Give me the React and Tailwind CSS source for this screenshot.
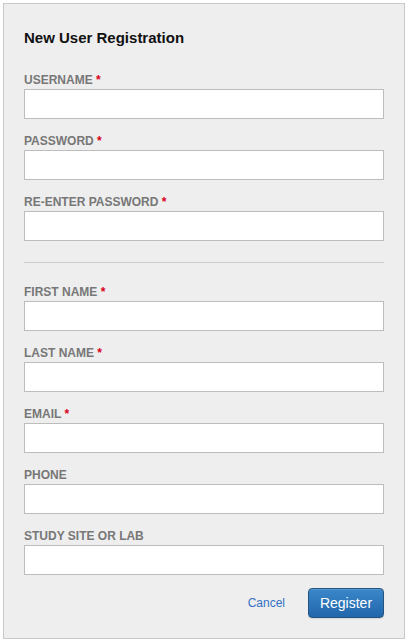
export default function App() {
  const section1 = ["USERNAME", "PASSWORD", "RE-ENTER PASSWORD"];
  const section2 = [
    ["FIRST NAME", true],
    ["LAST NAME", true],
    ["EMAIL", true],
    ["PHONE", false],
    ["STUDY SITE OR LAB", false],
  ];
  const Field = ({ label, required }) => (
    <div className="flex flex-col">
      <label className="text-[12px] leading-[17px] font-bold text-[#777777] pt-[2px]">
        {label}
        {required && <span className="text-[#d9001b]"> *</span>}
      </label>
      <input
        type="text"
        className="h-[30px] w-full bg-white border border-[#bdbdbd] outline-none px-2 text-[14px]"
      />
    </div>
  );
  return (
    <div
      className="min-h-[641px] pt-[3px] px-[3px]"
      style={{ fontFamily: '"Liberation Sans", Arial, sans-serif' }}
    >
      <div className="w-[402px] h-[636px] bg-[#eeeeee] border border-[#c8c8c8] px-5 pt-[23px] pb-5 flex flex-col">
        <h1 className="text-[15px] leading-[21px] font-bold text-[#111111] mb-[22px]">
          New User Registration
        </h1>
        <div className="flex flex-col gap-3">
          {section1.map((l) => (
            <Field key={l} label={l} required />
          ))}
        </div>
        <div className="h-px bg-[#cccccc] mt-[21px] mb-[19px]" />
        <div className="flex flex-col gap-3">
          {section2.map(([l, r]) => (
            <Field key={l} label={l} required={r} />
          ))}
        </div>
        <div className="flex justify-end items-center gap-[23px] mt-[13px]">
          <a className="text-[12px] text-[#3370c4] cursor-pointer">Cancel</a>
          <button className="w-[76px] h-[30px] rounded-[4px] border border-[#245580] bg-gradient-to-b from-[#3a87ca] to-[#2266ab] text-white text-[14px] shadow-[inset_0_1px_0_rgba(255,255,255,0.15),0_1px_1px_rgba(0,0,0,0.1)]">
            Register
          </button>
        </div>
      </div>
    </div>
  );
}
